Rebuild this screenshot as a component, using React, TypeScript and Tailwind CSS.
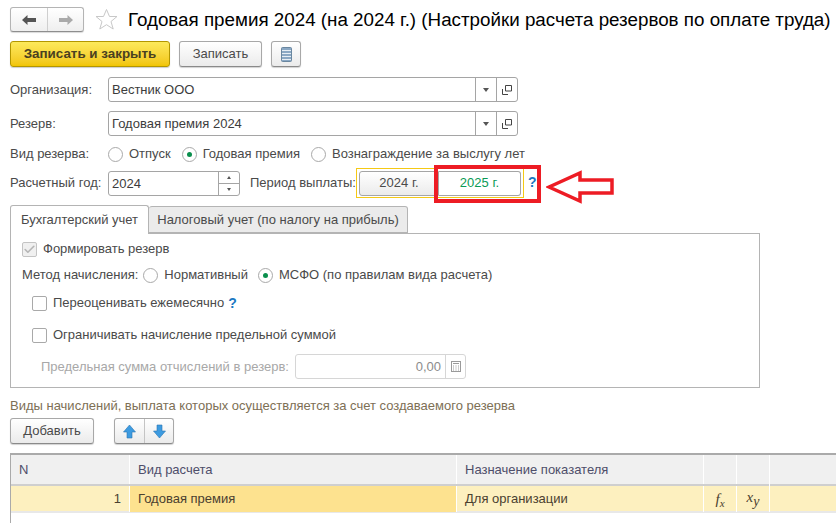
import React from 'react';
import { Check } from 'lucide-react';

const font = { fontFamily: '"Liberation Sans", Arial, sans-serif' };

function Radio({ on, label }: { on?: boolean; label: string }) {
  return (
    <span className="flex items-center gap-[6px]">
      <span className="w-[15px] h-[15px] rounded-full border border-[#a9a9a9] bg-white flex items-center justify-center">
        {on && <span className="w-[5px] h-[5px] rounded-full bg-[#0a8f4d]" />}
      </span>
      <span>{label}</span>
    </span>
  );
}

function CheckBox({ label, children }: { label: string; children?: React.ReactNode }) {
  return (
    <div className="flex items-center gap-[6px] h-[16px]">
      <span className="w-[15px] h-[15px] rounded-[2px] border border-[#a9a9a9] bg-white" />
      <span>{label}</span>
      {children}
    </div>
  );
}

function PickField({ value }: { value: string }) {
  return (
    <div className="flex-1 h-[25px] flex border border-[#a5a5a5] rounded-[3px] bg-white">
      <div className="flex-1 pl-[3px] leading-[23px] text-[#3c3c3c]">{value}</div>
      <div className="w-[21px] border-l border-[#a5a5a5] flex items-center justify-center">
        <span className="w-0 h-0 border-x-[3px] border-x-transparent border-t-[4px] border-t-[#555]" />
      </div>
      <div className="w-[21px] border-l border-[#a5a5a5] flex items-center justify-center">
        <svg width="10" height="10" viewBox="0 0 10 10" fill="none" stroke="#444" strokeWidth="1">
          <path d="M3.500 .5h6v5.500h-6z" />
          <path d="M.5 4v5.500h5.500" />
        </svg>
      </div>
    </div>
  );
}

function FormRow({ label, value }: { label: string; value: string }) {
  return (
    <div className="flex items-center h-[25px] w-[508px]">
      <span className="w-[98px]">{label}</span>
      <PickField value={value} />
    </div>
  );
}

const btn = 'h-[26px] rounded-[3px] border border-[#a8a8a8] border-b-[#8a8a8a] bg-gradient-to-b from-white to-[#ebebeb] shadow-[0_1px_1px_rgba(0,0,0,0.18)] flex items-center justify-center';

function UpArrow({ down }: { down?: boolean }) {
  return (
    <svg width="13" height="15" viewBox="0 0 13 15">
      <path
        d={down ? 'M4 1h5v6h3.500l-6 7-6-7H4z' : 'M6.500 1l6 7H9v6H4V8H.5z'}
        fill="#3d9be0"
        stroke="#2b76b4"
        strokeWidth=".6"
      />
    </svg>
  );
}

export default function App() {
  return (
    <div style={font} className="relative w-[836px] h-[523px] overflow-hidden bg-white text-[13px] text-[#4a4a4a] pl-[10px] pt-[7px]">
      {/* Header */}
      <div className="flex items-center h-[25px]">
        <div className="flex w-[74px] h-[25px] rounded-[3px] border border-[#b4b4b4] border-b-[#8e8e8e] bg-gradient-to-b from-white to-[#efefef] shadow-[0_1px_1px_rgba(0,0,0,0.15)]">
          <div className="w-[37px] flex items-center justify-center border-r border-[#cfcfcf]">
            <svg width="14" height="10" viewBox="0 0 14 10"><path d="M0 5l5.500-5v3H14v4H5.500v3z" fill="#555" /></svg>
          </div>
          <div className="flex-1 flex items-center justify-center">
            <svg width="14" height="10" viewBox="0 0 14 10"><path d="M14 5L8.500 0v3H0v4h8.500v3z" fill="#aaa" /></svg>
          </div>
        </div>
        <svg className="ml-[11px]" width="23" height="23" viewBox="0 0 23 23" fill="#fff" stroke="#c8c8c8" strokeWidth="1">
          <path d="M11.500 1.500l3 7h7.500l-6 5 2.200 7.500-6.700-4.300-6.700 4.300 2.200-7.500-6-5h7.500z" />
        </svg>
        <h1 className="ml-[10px] text-[18.8px] leading-[25px] text-black whitespace-nowrap">
          Годовая премия 2024 (на 2024 г.) (Настройки расчета резервов по оплате труда)
        </h1>
      </div>

      {/* Command bar */}
      <div className="flex gap-[9px] mt-[9px]">
        <button className="w-[160px] h-[26px] rounded-[3px] border border-[#b39600] bg-gradient-to-b from-[#fde95a] to-[#f2c500] shadow-[0_1px_1px_rgba(0,0,0,0.2)] font-bold text-[13.4px] text-[#4a4020]">
          Записать и закрыть
        </button>
        <button className={`${btn} w-[83px]`}>Записать</button>
        <button className={`${btn} w-[30px]`}>
          <svg width="11" height="15" viewBox="0 0 11 15">
            <rect x=".5" y=".5" width="10" height="14" rx="1" fill="#8aa8c4" stroke="#6a87a0" />
            <path d="M1 3.500h9M1 6.500h9M1 9.500h9M1 12.500h9" stroke="#e6eef5" />
          </svg>
        </button>
      </div>

      {/* Form head */}
      <div className="flex flex-col gap-[9px] mt-[10px]">
        <FormRow label="Организация:" value="Вестник ООО" />
        <FormRow label="Резерв:" value="Годовая премия 2024" />
      </div>

      <div className="flex items-center h-[16px] mt-[10px]">
        <span className="w-[98px]">Вид резерва:</span>
        <div className="flex gap-[11px]">
          <Radio label="Отпуск" />
          <Radio on label="Годовая премия" />
          <Radio label="Вознаграждение за выслугу лет" />
        </div>
      </div>

      <div className="flex items-center h-[30px] mt-[6px]">
        <span className="w-[98px]">Расчетный год:</span>
        <div className="w-[132px] h-[25px] flex border border-[#a5a5a5] rounded-[3px] bg-white">
          <div className="flex-1 pl-[3px] leading-[23px] text-[#3c3c3c]">2024</div>
          <div className="w-[21px] border-l border-[#a5a5a5] flex flex-col">
            <div className="flex-1 border-b border-[#a5a5a5] flex items-center justify-center">
              <span className="w-0 h-0 border-x-[2px] border-x-transparent border-b-[3px] border-b-[#555]" />
            </div>
            <div className="flex-1 flex items-center justify-center">
              <span className="w-0 h-0 border-x-[2px] border-x-transparent border-t-[3px] border-t-[#555]" />
            </div>
          </div>
        </div>
        <span className="ml-[10px] w-[106px] whitespace-nowrap">Период выплаты:</span>
        <div className="w-[168px] h-[30px] border border-[#f5c915] flex items-center px-[2px]">
          <div className="w-[80px] h-[25px] rounded-l-[3px] border border-[#a5a5a5] bg-gradient-to-b from-white to-[#ebebeb] flex items-center justify-center">
            2024 г.
          </div>
          <div className="flex-1 h-[25px] rounded-r-[3px] border border-l-0 border-[#a5a5a5] bg-white flex items-center justify-center text-[#0a9a55]">
            2025 г.
          </div>
        </div>
        <span className="ml-[4px] -mt-[1px] font-bold text-[#1a78c2] text-[14px]">?</span>
      </div>

      {/* Tabs */}
      <div className="flex h-[29px] mt-[7px] relative z-10">
        <div className="w-[139px] h-[29px] rounded-t-[3px] border border-b-0 border-[#b4b4b4] bg-white flex items-center justify-center">
          Бухгалтерский учет
        </div>
        <div className="w-[259px] h-[27px] mt-[1px] rounded-t-[3px] border border-l-0 border-[#b4b4b4] bg-[#ebebeb] flex items-center justify-center">
          Налоговый учет (по налогу на прибыль)
        </div>
      </div>
      <div className="w-[750px] h-[155px] -mt-[1px] border border-[#b4b4b4] pl-[11px] pt-[7px]">
        <div className="flex items-center gap-[6px] h-[16px] text-[#4a4a4a]">
          <span className="w-[15px] h-[15px] rounded-[2px] border border-[#c4c4c4] bg-[#f0f0f0] flex items-center justify-center">
            <Check size={13} strokeWidth={3} color="#b5b5b5" />
          </span>
          <span>Формировать резерв</span>
        </div>
        <div className="flex items-center gap-[5px] h-[16px] mt-[10px]">
          <span>Метод начисления:</span>
          <div className="flex gap-[10px]">
            <Radio label="Нормативный" />
            <Radio on label="МСФО (по правилам вида расчета)" />
          </div>
        </div>
        <div className="pl-[10px] mt-[12px]">
          <CheckBox label="Переоценивать ежемесячно">
            <span className="-ml-[2px] font-bold text-[#1a78c2] text-[14px]">?</span>
          </CheckBox>
          <div className="mt-[16px]">
            <CheckBox label="Ограничивать начисление предельной суммой" />
          </div>
          <div className="flex items-center mt-[11px] pl-[9px] text-[#a8a8a8]">
            <span className="w-[254px] whitespace-nowrap">Предельная сумма отчислений в резерв:</span>
            <div className="w-[171px] h-[25px] flex border border-[#d6d6d6] rounded-[3px]">
              <div className="flex-1 text-right pr-[4px] leading-[23px] text-[#8c8c8c]">0,00</div>
              <div className="w-[20px] border-l border-[#d6d6d6] flex items-center justify-center">
                <svg width="10" height="11" viewBox="0 0 10 11" fill="none" stroke="#9a9a9a">
                  <rect x=".5" y=".5" width="9" height="10" />
                  <path d="M2 2.500h6M2 5h1M4.500 5h1M7 5h1M2 7h1M4.500 7h1M7 7h1M2 9h1M4.500 9h1M7 9h1" />
                </svg>
              </div>
            </div>
          </div>
        </div>
      </div>

      {/* Table section */}
      <p className="mt-[10px] leading-[16px] text-[#7d6f55]">
        Виды начислений, выплата которых осуществляется за счет создаваемого резерва
      </p>
      <div className="flex mt-[4px]">
        <button className={`${btn} w-[84px]`}>Добавить</button>
        <div className={`${btn} ml-[20px] w-[60px]`}>
          <div className="w-[30px] h-full flex items-center justify-center border-r border-[#c4c4c4]"><UpArrow /></div>
          <div className="flex-1 h-full flex items-center justify-center"><UpArrow down /></div>
        </div>
      </div>

      <div className="mt-[9px] border-l border-t-2 border-[#aaa] h-[70px]">
        <div className="grid grid-cols-[119px_327px_247px_33px_33px_1fr] h-[31px] bg-[#f0f0f0] border-b-2 border-[#cfcfcf] text-[#4e4e6a]">
          <div className="pl-[8px] leading-[29px] border-r border-white">N</div>
          <div className="pl-[8px] leading-[29px] border-r border-white">Вид расчета</div>
          <div className="pl-[8px] leading-[29px] border-r border-white">Назначение показателя</div>
          <div className="border-r border-white" />
          <div className="border-r border-white" />
          <div />
        </div>
        <div className="grid grid-cols-[119px_327px_247px_33px_33px_1fr] h-[27px] bg-[#fdf0bf] border-b-2 border-[#e8e8e8] leading-[26px] text-[#4a4030]">
          <div className="pr-[8px] text-right border-r border-white">1</div>
          <div className="pl-[8px] bg-[#fde28f] border-r border-white">Годовая премия</div>
          <div className="pl-[8px] border-r border-white">Для организации</div>
          <div className="text-center border-r border-white italic font-['Liberation_Serif'] text-[15px]">f<sub className="text-[11px]">x</sub></div>
          <div className="text-center border-r border-white italic font-['Liberation_Serif'] text-[15px] -mt-[2px]">x<sub className="text-[14px]">y</sub></div>
          <div />
        </div>
      </div>

      {/* Annotation over the screenshot */}
      <div className="absolute left-[434px] top-[165px] w-[107px] h-[38px] border-[4px] border-[#ed1c24]" />
      <svg className="absolute left-[546px] top-[170px]" width="70" height="34" viewBox="0 0 70 34" fill="#fff" stroke="#ed1c24" strokeWidth="3.5">
        <path d="M3 17L34 3v7h32v13H34v8z" />
      </svg>
    </div>
  );
}
